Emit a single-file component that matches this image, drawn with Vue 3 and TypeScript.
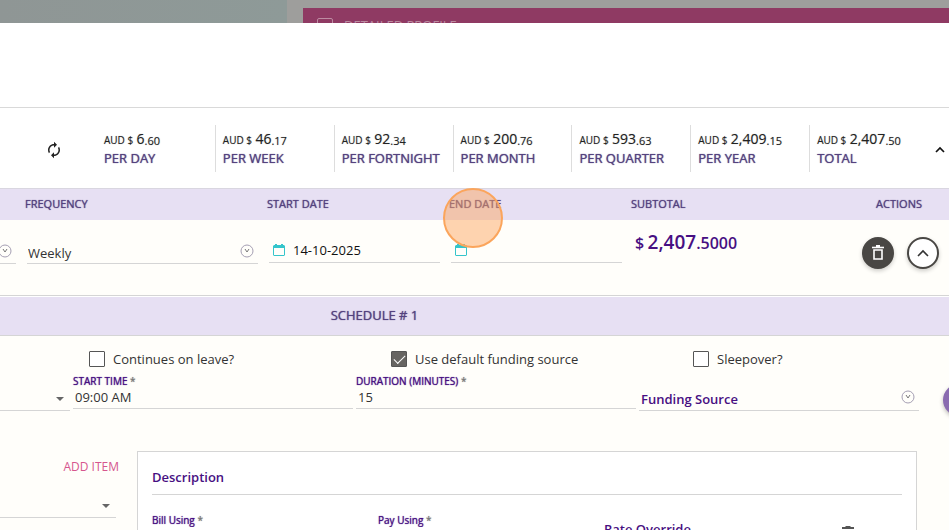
<script setup lang="ts">
interface Summary {
  whole: string
  cents: string
  label: string
}

interface Check {
  id: string
  label: string
  checked: boolean
}

const summaries: Summary[] = [
  { whole: '6', cents: '.60', label: 'PER DAY' },
  { whole: '46', cents: '.17', label: 'PER WEEK' },
  { whole: '92', cents: '.34', label: 'PER FORTNIGHT' },
  { whole: '200', cents: '.76', label: 'PER MONTH' },
  { whole: '593', cents: '.63', label: 'PER QUARTER' },
  { whole: '2,409', cents: '.15', label: 'PER YEAR' },
  { whole: '2,407', cents: '.50', label: 'TOTAL' },
]

const checks: Check[] = [
  { id: 'leave', label: 'Continues on leave?', checked: false },
  { id: 'default-source', label: 'Use default funding source', checked: true },
  { id: 'sleepover', label: 'Sleepover?', checked: false },
]
</script>

<template>
  <div class="page">
    <div class="behind">
      <div class="behind-photo"></div>
      <div class="behind-bar">
        <span class="behind-box"></span>
        <span>DETAILED PROFILE</span>
      </div>
    </div>

    <main class="modal">
      <header class="modal-head"></header>

      <section class="summary">
        <button class="plain refresh" aria-label="Refresh">
          <svg width="18" height="18" viewBox="0 0 24 24" fill="#222">
            <path d="M12 6v3l4-4-4-4v3c-4.42 0-8 3.58-8 8 0 1.57.46 3.03 1.24 4.26L6.7 14.8A5.87 5.87 0 0 1 6 12c0-3.31 2.69-6 6-6zm6.76 1.74L17.3 9.2c.44.84.7 1.79.7 2.8 0 3.31-2.69 6-6 6v-3l-4 4 4 4v-3c4.42 0 8-3.58 8-8 0-1.57-.46-3.03-1.24-4.26z" />
          </svg>
        </button>
        <div v-for="s in summaries" :key="s.label" class="sum">
          <div class="amount">
            <span class="cur">AUD $</span> <span class="whole">{{ s.whole }}</span><span class="cents">{{ s.cents }}</span>
          </div>
          <div class="period strong">{{ s.label }}</div>
        </div>
        <button class="plain chevron" aria-label="Collapse summary">
          <svg width="10" height="10" viewBox="0 0 10 10" fill="none" stroke="#111" stroke-width="1.7">
            <path d="M1 7l4-4 4 4" />
          </svg>
        </button>
      </section>

      <table class="lines">
        <colgroup>
          <col class="c-lead" />
          <col class="c-freq" />
          <col class="c-date" />
          <col class="c-date" />
          <col />
          <col class="c-act" />
        </colgroup>
        <thead>
          <tr class="strong">
            <th></th>
            <th>FREQUENCY</th>
            <th>START DATE</th>
            <th>END DATE</th>
            <th>SUBTOTAL</th>
            <th class="th-act">ACTIONS</th>
          </tr>
        </thead>
        <tbody>
          <tr>
            <td class="td-lead">
              <div class="field tall lead">
                <svg class="circle-v" width="14" height="14" viewBox="0 0 14 14" fill="none" stroke="#a59fb3">
                  <circle cx="7" cy="7" r="6" />
                  <path d="M5 5l2 3 2-3" stroke="#777" />
                </svg>
              </div>
            </td>
            <td>
              <div class="field tall freq">
                <select aria-label="Frequency"><option>Weekly</option></select>
                <svg class="circle-v" width="14" height="14" viewBox="0 0 14 14" fill="none" stroke="#a59fb3">
                  <circle cx="7" cy="7" r="6" />
                  <path d="M5 5l2 3 2-3" stroke="#777" />
                </svg>
              </div>
            </td>
            <td>
              <div class="field date">
                <svg width="12" height="14" viewBox="0 0 12 14" fill="#35c5cb">
                  <path d="M2 1h2v1h4V1h2v1h1l1 1v9l-1 1H1l-1-1V3l1-1h1zM1 5v7h10V5z" fill-rule="evenodd" />
                </svg>
                <input type="text" value="14-10-2025" aria-label="Start date" />
              </div>
            </td>
            <td>
              <div class="field date">
                <svg width="12" height="14" viewBox="0 0 12 14" fill="#35c5cb">
                  <path d="M2 1h2v1h4V1h2v1h1l1 1v9l-1 1H1l-1-1V3l1-1h1zM1 5v7h10V5z" fill-rule="evenodd" />
                </svg>
                <input type="text" value="" aria-label="End date" />
              </div>
            </td>
            <td>
              <div class="subtotal"><span class="s-cur">$</span> <span class="s-whole">2,407</span><span class="s-cents">.5000</span></div>
            </td>
            <td>
              <div class="actions">
                <button class="round dark" aria-label="Delete">
                  <svg width="12" height="16" viewBox="0 0 12 16" fill="none" stroke="#fff">
                    <path d="M0 2.5h12" stroke-width="1.6" />
                    <path d="M4 1h4" stroke-width="2" />
                    <path d="M2 5h8v9H2z" stroke-width="1.6" />
                  </svg>
                </button>
                <button class="round light" aria-label="Collapse">
                  <svg width="12" height="8" viewBox="0 0 12 8" fill="none" stroke="#333" stroke-width="1.6">
                    <path d="M1 7l5-5 5 5" />
                  </svg>
                </button>
              </div>
            </td>
          </tr>
        </tbody>
      </table>

      <h2 class="schedule strong">SCHEDULE # 1</h2>

      <div class="checks">
        <label v-for="c in checks" :key="c.id" class="check" :for="c.id">
          <input :id="c.id" type="checkbox" :checked="c.checked" />
          <span>{{ c.label }}</span>
        </label>
      </div>

      <div class="fields">
        <div class="field drop">
          <select aria-label="Day"><option></option></select>
          <svg width="8" height="4" viewBox="0 0 8 4" fill="#666"><path d="M0 0h8L4 4z" /></svg>
        </div>
        <div class="labelled">
          <label class="strong" for="start">START TIME<span class="star"> *</span></label>
          <input id="start" type="text" value="09:00 AM" />
        </div>
        <div class="labelled">
          <label class="strong" for="duration">DURATION (MINUTES)<span class="star"> *</span></label>
          <input id="duration" type="text" value="15" />
        </div>
        <div class="field funding">
          <select class="strong" aria-label="Funding Source"><option>Funding Source</option></select>
          <svg class="circle-v" width="14" height="14" viewBox="0 0 14 14" fill="none" stroke="#a59fb3">
            <circle cx="7" cy="7" r="6" />
            <path d="M5 5l2 3 2-3" stroke="#777" />
          </svg>
        </div>
        <button class="fab" aria-label="Add"></button>
      </div>

      <div class="items">
        <div class="side">
          <button class="add">ADD ITEM</button>
          <div class="field drop">
            <select aria-label="Item"><option></option></select>
            <svg width="8" height="4" viewBox="0 0 8 4" fill="#666"><path d="M0 0h8L4 4z" /></svg>
          </div>
        </div>
        <section class="card">
          <h3>Description</h3>
          <div class="card-row">
            <div class="mini">
              <label class="strong" for="bill">Bill Using<span class="star"> *</span></label>
              <input id="bill" type="text" />
            </div>
            <div class="mini">
              <label class="strong" for="pay">Pay Using<span class="star"> *</span></label>
              <input id="pay" type="text" />
            </div>
            <div class="rate">Rate Override</div>
            <button class="plain bin" aria-label="Delete rate">
              <svg width="12" height="16" viewBox="0 0 12 16" fill="#555">
                <path d="M0 1h3l1-1h4l1 1h3v2H0zM1 4h10v12H1z" />
              </svg>
            </button>
          </div>
        </section>
      </div>
    </main>

    <div class="pointer"></div>
  </div>
</template>

<style>
body {
  margin: 0;
}
</style>

<style scoped>
* {
  box-sizing: border-box;
}

.page {
  position: relative;
  height: 100vh;
  overflow: hidden;
  background: #fffefa;
  color: #333;
  font-family: "Open Sans", "Noto Sans", sans-serif;
  font-size: 13px;
}

button,
input,
select {
  font: inherit;
  color: inherit;
}

svg {
  display: block;
  flex: none;
}

.strong {
  text-shadow: 0 0 1px currentColor;
}

.behind {
  display: flex;
  height: 23px;
  background: #9e9e9c;
  overflow: hidden;
}

.behind-photo {
  width: 287px;
  background: linear-gradient(90deg, #8f9695, #8e9a98);
}

.behind-bar {
  flex: 1;
  display: flex;
  align-items: flex-start;
  gap: 11px;
  margin: 8px 0 0 16px;
  padding: 8px 14px;
  background: #8f3a63;
  color: #bd8ba2;
  font-size: 13px;
  line-height: 18px;
}

.behind-box {
  width: 16px;
  height: 16px;
  margin-top: 2px;
  border: 1px solid #bd8ba2;
  border-radius: 2px;
}

.modal-head {
  height: 85px;
  border-bottom: 1px solid #d9d9d9;
  background: #fff;
}

.plain {
  display: flex;
  align-items: center;
  justify-content: center;
  padding: 0;
  border: 0;
  background: none;
}

.summary {
  display: grid;
  grid-template-columns: 96px repeat(7, 1fr) 21px;
  padding: 17px 0 16px;
  background: #fff;
}

.refresh {
  padding: 2px 0 0 11px;
}

.chevron {
  justify-content: flex-end;
  padding: 2px 4px 0 0;
}

.sum {
  height: 47px;
  padding: 4px 0 0 7px;
  border-left: 1px solid #ddd;
  white-space: nowrap;
}

.refresh + .sum {
  border-color: transparent;
}

.amount {
  height: 19px;
  line-height: 20px;
  color: #222;
  text-shadow: 0 0 1px #2226;
}

.cur {
  font-size: 10px;
}

.whole {
  font-size: 14px;
}

.cents {
  font-size: 11px;
  vertical-align: -1px;
}

.period {
  color: #54427f;
  font-size: 13px;
  line-height: 20px;
}

.lines {
  width: 100%;
  table-layout: fixed;
  border-spacing: 0;
}

.c-lead {
  width: 21px;
}

.c-freq {
  width: 242px;
}

.c-date {
  width: 182px;
}

.c-act {
  width: 100px;
}

.lines th {
  height: 32px;
  padding: 0 4px 2px;
  border-top: 1px solid #d9d6e0;
  background: #e7e0f3;
  color: #54427f;
  font-size: 11px;
  font-weight: 400;
  text-align: left;
}

.lines .th-act {
  padding-right: 27px;
  text-align: right;
}

.lines td {
  height: 75px;
  padding: 13px 5px 0 6px;
  vertical-align: top;
}

.lines .td-lead {
  padding-left: 0;
}

.field {
  display: flex;
  align-items: center;
  border-bottom: 1px solid #d5d5d5;
}

.field select,
.field input {
  flex: 1;
  min-width: 0;
  height: 24px;
  padding: 0;
  border: 0;
  background: none;
  appearance: none;
}

.tall {
  height: 31px;
  padding-top: 10px;
}

.tall .circle-v {
  margin: 0 4px 4px 0;
}

.lead {
  justify-content: flex-end;
}

.freq {
  padding-left: 1px;
}

.date {
  height: 30px;
  gap: 8px;
  padding: 4px 0 0 4px;
}

.date input {
  color: #111;
}

.subtotal {
  padding: 0 2px;
  color: #470f82;
  font-weight: 600;
  line-height: 18px;
  white-space: nowrap;
}

.s-cur,
.s-cents {
  font-size: 16px;
}

.s-whole {
  font-size: 19px;
}

.actions {
  display: flex;
  justify-content: flex-end;
  gap: 13px;
  margin: 4px 5px 0 0;
}

.round {
  display: flex;
  align-items: center;
  justify-content: center;
  width: 32px;
  height: 32px;
  padding: 0;
  border: 2px solid #494744;
  border-radius: 50%;
  box-shadow: 0 2px 4px #0003;
}

.dark {
  background: #494744;
}

.light {
  background: #fff;
}

.schedule {
  height: 41px;
  margin: 0;
  padding-right: 200px;
  border-top: 1px solid #d5d5d5;
  border-bottom: 1px solid #d5d5d5;
  background: #e7e0f3;
  box-shadow: inset 0 1px #fff;
  color: #54427f;
  font-size: 13px;
  font-weight: 400;
  line-height: 38px;
  text-align: center;
}

.checks {
  display: grid;
  grid-template-columns: 302fr 302fr 256fr;
  padding: 13px 0 0 89px;
}

.check {
  display: flex;
  align-items: center;
  gap: 8px;
  height: 20px;
  white-space: nowrap;
}

.check input {
  width: 16px;
  height: 16px;
  margin: 0;
  border: 1px solid #555;
  border-radius: 1px;
  background: #fff;
  appearance: none;
}

.check input:checked {
  display: grid;
  place-items: center;
  background: #666461;
}

.check input:checked::before {
  content: "";
  width: 10px;
  height: 5px;
  margin-bottom: 3px;
  border-bottom: 1px solid #fff;
  border-left: 1px solid #fff;
  transform: rotate(-45deg);
}

.fields {
  display: grid;
  grid-template-columns: 70px 1fr 1fr 1fr 27px;
  column-gap: 3px;
  padding-top: 5px;
}

.drop {
  height: 37px;
  padding: 13px 6px 0 0;
}

.labelled {
  height: 35px;
  border-bottom: 1px solid #d5d5d5;
}

.labelled label,
.mini label {
  display: block;
  height: 14px;
  color: #470f82;
  font-size: 10px;
  line-height: 14px;
  white-space: nowrap;
}

.star {
  color: #777;
}

.labelled input {
  display: block;
  width: 100%;
  height: 18px;
  padding: 0 0 0 2px;
  border: 0;
  background: none;
}

.funding {
  height: 37px;
  padding: 14px 4px 0 2px;
  color: #470f82;
  font-weight: 600;
}

.funding .circle-v {
  margin-bottom: 4px;
}

.fab {
  width: 32px;
  height: 32px;
  margin: 10px 0 0 21px;
  padding: 0;
  border: 0;
  border-radius: 50%;
  background: #8a6bb0;
  box-shadow: 0 2px 4px #0004;
}

.funding .strong {
  text-shadow: none;
}

.items {
  display: grid;
  grid-template-columns: 119px 1fr;
  gap: 18px;
  padding: 35px 32px 0 0;
}

.side .add {
  display: block;
  margin: 8px 0 0 auto;
  padding: 0;
  border: 0;
  background: none;
  color: #d6568e;
  font-size: 12px;
  line-height: 16px;
}

.side .drop {
  margin: 6px 3px 0 0;
}

.card {
  height: 160px;
  padding: 11px 14px;
  border: 1px solid #d5d5d5;
  background: #fff;
}

.card h3 {
  height: 32px;
  margin: 0;
  border-bottom: 1px solid #d5d5d5;
  color: #470f82;
  font-size: 13px;
  font-weight: 600;
  line-height: 28px;
}

.card-row {
  display: grid;
  grid-template-columns: 226fr 226fr 238fr 60fr;
  padding-top: 18px;
}

.mini input {
  width: 90%;
  border: 0;
}

.rate {
  padding-top: 6px;
  color: #470f82;
  font-weight: 600;
  line-height: 20px;
}

.bin {
  align-self: start;
  justify-content: flex-start;
  padding-top: 13px;
}

.pointer {
  position: absolute;
  top: 188px;
  left: 443px;
  width: 60px;
  height: 60px;
  border: 2px solid #fba55c;
  border-radius: 50%;
  background: rgb(253 165 95 / 48%);
}
</style>
